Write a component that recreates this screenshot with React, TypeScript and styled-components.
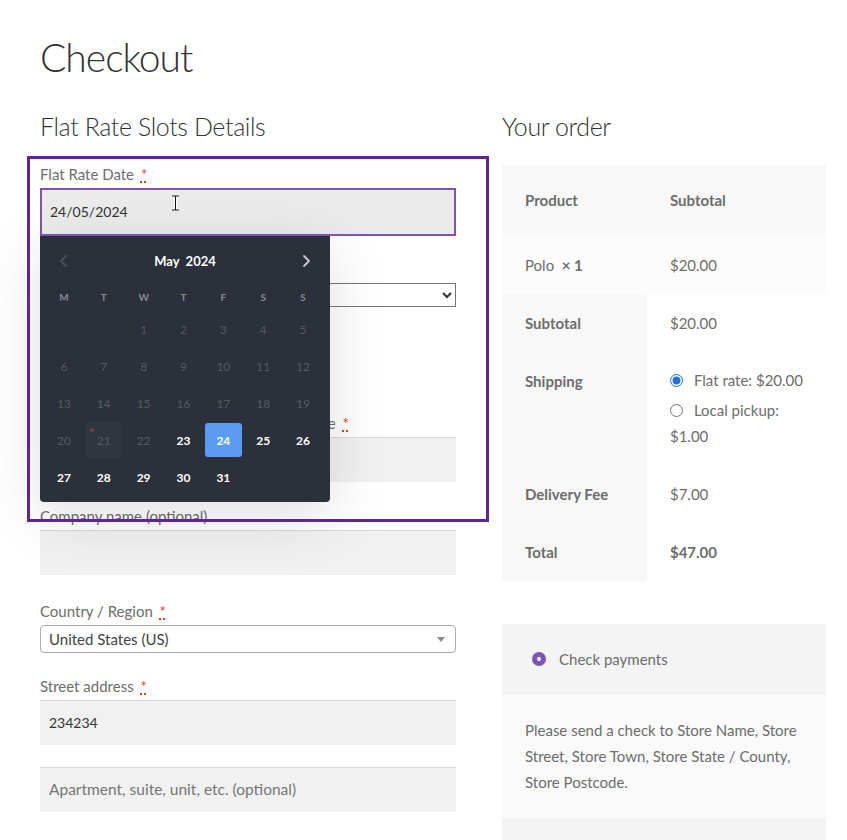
import React from "react";
import styled, { createGlobalStyle } from "styled-components";

const GlobalStyle = createGlobalStyle`
  html, body {
    margin: 0;
    padding: 0;
    background: #fff;
    overflow: hidden;
  }
  body {
    font-family: Lato, "Liberation Sans", sans-serif;
    font-size: 15px;
    color: #6d6d6d;
  }
  * {
    box-sizing: border-box;
  }
`;

const Page = styled.div`
  width: 786px;
  margin-left: 40px;
  padding-top: 34px;
  height: 840px;
`;

const Title = styled.h1`
  margin: 0;
  font-size: 39px;
  font-weight: 300;
  letter-spacing: -1px;
  line-height: 1.2;
  color: #333;
`;

const Columns = styled.div`
  display: grid;
  grid-template-columns: 416px 324px;
  column-gap: 46px;
  margin-top: 30px;
  align-items: start;
`;

const Column = styled.div`
  position: relative;
`;

const SectionTitle = styled.h3<{ $mb?: number }>`
  margin: 0 0 ${(p) => p.$mb ?? 20}px;
  font-size: 25px;
  font-weight: 300;
  letter-spacing: -0.4px;
  line-height: 1.2;
  color: #333;
`;

const Spacer = styled.div<{ $h: number }>`
  height: ${(p) => p.$h}px;
`;

// purple highlight frame drawn over the form
const Highlight = styled.div`
  position: absolute;
  top: 45px;
  left: -13px;
  width: 462px;
  height: 366px;
  border: 3px solid #5f2590;
  pointer-events: none;
  z-index: 6;
`;

const Field = styled.div<{ $mb?: number; $w?: string }>`
  position: relative;
  width: ${(p) => p.$w ?? "100%"};
  margin-bottom: ${(p) => p.$mb ?? 24}px;
`;

const NameRow = styled.div`
  display: flex;
  justify-content: space-between;
`;

const Label = styled.label`
  display: block;
  line-height: 24px;
  margin-bottom: 2px;
  font-size: 15px;
  color: #6d6d6d;
`;

const Req = styled.abbr`
  color: #e2401c;
  margin-left: 3px;
  text-decoration: underline dotted;
  text-decoration-thickness: 2px;
  text-underline-offset: 2px;
`;

const TextInput = styled.input<{ $focus?: boolean }>`
  display: block;
  width: 100%;
  height: ${(p) => (p.$focus ? 48 : 45)}px;
  padding: 0 ${(p) => (p.$focus ? 8 : 9)}px;
  font-family: inherit;
  font-size: 14px;
  color: #333;
  background: ${(p) => (p.$focus ? "#ebebeb" : "#f1f1f1")};
  border: ${(p) => (p.$focus ? "2px solid #7f54b3" : "0")};
  border-top: ${(p) => (p.$focus ? "2px solid #7f54b3" : "1px solid #dadada")};
  outline: none;
  &::placeholder {
    font-size: 15.5px;
    color: #767676;
  }
`;

const NativeSelect = styled.select`
  display: block;
  width: 100%;
  height: 24px;
  font-family: inherit;
  font-size: 13px;
  background: #fff;
  border: 1px solid #767676;
  color: #333;
`;

const Combo = styled.div`
  position: relative;
  height: 28px;
  border: 1px solid #aaa;
  border-radius: 4px;
  background: #fff;
  padding-left: 8px;
  line-height: 26px;
  font-size: 15px;
  color: #444;
  &::after {
    content: "";
    position: absolute;
    right: 10px;
    top: 11px;
    border-left: 4px solid transparent;
    border-right: 4px solid transparent;
    border-top: 5px solid #888;
  }
`;

const Cursor = styled.svg`
  position: absolute;
  left: 131px;
  top: 33px;
  z-index: 4;
`;

/* ---------- date picker ---------- */

const Picker = styled.div`
  position: absolute;
  top: 100%;
  left: 0;
  width: 290px;
  padding: 0 7px 6px 4px;
  background: #2b303a;
  border-radius: 0 0 4px 4px;
  box-shadow: 0 14px 60px rgba(0, 0, 0, 0.13);
  z-index: 5;
`;

const PickerHead = styled.div`
  height: 50px;
  display: flex;
  align-items: center;
  justify-content: space-between;
  padding: 0 7px 0 10px;
`;

const Month = styled.div`
  display: flex;
  gap: 6px;
  font-size: 13px;
  font-weight: 700;
  color: #fff;
`;

const WeekRow = styled.div`
  display: grid;
  grid-template-columns: repeat(7, 1fr);
  height: 22px;
  align-items: center;
  justify-items: center;
  font-size: 10px;
  font-weight: 700;
  color: #858a93;
`;

const DayGrid = styled.div`
  display: grid;
  grid-template-columns: repeat(7, 1fr);
  grid-auto-rows: 37px;
  align-items: center;
  justify-items: center;
  margin-top: 3px;
`;

type DayState = "off" | "on" | "selected" | "today";

const Day = styled.div<{ $state: DayState }>`
  position: relative;
  width: 37px;
  height: 34px;
  display: flex;
  align-items: center;
  justify-content: center;
  border-radius: 3px;
  font-size: 12px;
  font-weight: ${(p) => (p.$state === "on" || p.$state === "selected" ? 700 : 400)};
  color: ${(p) => (p.$state === "on" || p.$state === "selected" ? "#fff" : "#555a64")};
  background: ${(p) =>
    p.$state === "selected" ? "#5b9cf3" : p.$state === "today" ? "#30353f" : "transparent"};
`;

const TodayDot = styled.span`
  position: absolute;
  left: 5px;
  top: 5px;
  width: 4px;
  height: 4px;
  border-radius: 50%;
  background: #7d3a4a;
`;

const Chevron = ({ dir, color }: { dir: "l" | "r"; color: string }) => (
  <svg width="20" height="20" viewBox="0 0 20 20">
    <path
      d={dir === "l" ? "M12 5 L7 10 L12 15" : "M8 5 L13 10 L8 15"}
      fill="none"
      stroke={color}
      strokeWidth="1.8"
      strokeLinecap="round"
      strokeLinejoin="round"
    />
  </svg>
);

const dayState = (d: number): DayState =>
  d === 24 ? "selected" : d === 21 ? "today" : d >= 23 ? "on" : "off";

const DatePicker = () => {
  const cells: (number | null)[] = [null, null];
  for (let d = 1; d <= 31; d++) cells.push(d);
  return (
    <Picker>
      <PickerHead>
        <Chevron dir="l" color="#4a4f59" />
        <Month>
          <span>May</span>
          <span>2024</span>
        </Month>
        <Chevron dir="r" color="#c9ccd1" />
      </PickerHead>
      <WeekRow>
        {["M", "T", "W", "T", "F", "S", "S"].map((w, i) => (
          <span key={i}>{w}</span>
        ))}
      </WeekRow>
      <DayGrid>
        {cells.map((d, i) =>
          d === null ? (
            <span key={i} />
          ) : (
            <Day key={i} $state={dayState(d)}>
              {d === 21 && <TodayDot />}
              {d}
            </Day>
          )
        )}
      </DayGrid>
    </Picker>
  );
};

/* ---------- order review ---------- */

const OrderTable = styled.table`
  width: 100%;
  border-collapse: collapse;
  font-size: 15px;
  color: #6d6d6d;
  margin-bottom: 43px;
`;

const HeadCell = styled.th<{ $w?: number }>`
  text-align: left;
  font-weight: 700;
  background: #f8f8f8;
  padding: 23px 23px 24px;
  line-height: 24px;
  width: ${(p) => (p.$w ? `${p.$w}px` : "auto")};
`;

const ItemCell = styled.td`
  background: #fcfcfc;
  padding: 17px 23px;
  line-height: 24px;
`;

const FootLabel = styled.th`
  text-align: left;
  vertical-align: top;
  font-weight: 700;
  background: #f8f8f8;
  padding: 17px 23px;
  line-height: 24px;
`;

const FootValue = styled.td<{ $bold?: boolean }>`
  vertical-align: top;
  background: #fff;
  padding: 17px 23px;
  line-height: 24px;
  font-weight: ${(p) => (p.$bold ? 700 : 400)};
`;

const ShipList = styled.ul`
  list-style: none;
  margin: -2px 0 -1px;
  padding: 0;
  li {
    line-height: 26px;
    margin-bottom: 4px;
  }
  li:last-child {
    margin-bottom: 0;
  }
`;

const Radio = styled.input`
  width: 13px;
  height: 13px;
  margin: 0 11px 0 0;
  vertical-align: -1px;
  accent-color: #1a73e8;
`;

const Payment = styled.div`
  background: #f4f4f4;
  padding-bottom: 40px;
`;

const Method = styled.div`
  height: 71px;
  display: flex;
  align-items: center;
  gap: 13px;
  padding-left: 30px;
  font-size: 15px;
`;

const PurpleRadio = styled.span`
  width: 14px;
  height: 14px;
  border-radius: 50%;
  background: #7f54b3;
  position: relative;
  &::after {
    content: "";
    position: absolute;
    left: 5px;
    top: 5px;
    width: 4px;
    height: 4px;
    border-radius: 50%;
    background: #fff;
  }
`;

const PaymentNote = styled.div`
  background: #fafafa;
  padding: 22px 23px 23px;
  line-height: 26px;
  font-size: 15px;
`;

export default function App() {
  return (
    <>
      <GlobalStyle />
      <Page>
        <Title>Checkout</Title>
        <Columns>
          <Column>
            <SectionTitle $mb={21}>Flat Rate Slots Details</SectionTitle>
            <Field $mb={21}>
              <Label>
                Flat Rate Date <Req title="required">*</Req>
              </Label>
              <TextInput $focus readOnly value="24/05/2024" />
              <Cursor width="9" height="16" viewBox="0 0 9 16">
                <path d="M1 1 H8 M4.5 1 V15 M1 15 H8" stroke="#fff" strokeWidth="3" fill="none" />
                <path d="M1 1 H8 M4.5 1 V15 M1 15 H8" stroke="#111" strokeWidth="1" fill="none" />
              </Cursor>
              <DatePicker />
            </Field>
            <Field>
              <Label>
                Flat Rate Time <Req title="required">*</Req>
              </Label>
              <NativeSelect defaultValue="">
                <option value="">Select a time slot</option>
              </NativeSelect>
            </Field>
            <Spacer $h={80} />
            <NameRow>
              <Field $w="47%" $mb={22}>
                <Label>
                  First name <Req title="required">*</Req>
                </Label>
                <TextInput />
              </Field>
              <Field $w="45%" $mb={22}>
                <Label>
                  Last name <Req title="required">*</Req>
                </Label>
                <TextInput />
              </Field>
            </NameRow>
            <Field>
              <Label>Company name (optional)</Label>
              <TextInput />
            </Field>
            <Field $mb={21}>
              <Label>
                Country / Region <Req title="required">*</Req>
              </Label>
              <Combo>United States (US)</Combo>
            </Field>
            <Field $mb={22}>
              <Label>
                Street address <Req title="required">*</Req>
              </Label>
              <TextInput readOnly value="234234" />
            </Field>
            <Field>
              <TextInput placeholder="Apartment, suite, unit, etc. (optional)" />
            </Field>
            <Highlight />
          </Column>

          <Column>
            <SectionTitle $mb={24}>Your order</SectionTitle>
            <OrderTable>
              <thead>
                <tr>
                  <HeadCell $w={146}>Product</HeadCell>
                  <HeadCell>Subtotal</HeadCell>
                </tr>
              </thead>
              <tbody>
                <tr>
                  <ItemCell>
                    Polo <strong>&nbsp;× 1</strong>
                  </ItemCell>
                  <ItemCell>$20.00</ItemCell>
                </tr>
              </tbody>
              <tfoot>
                <tr>
                  <FootLabel>Subtotal</FootLabel>
                  <FootValue>$20.00</FootValue>
                </tr>
                <tr>
                  <FootLabel>Shipping</FootLabel>
                  <FootValue>
                    <ShipList>
                      <li style={{ whiteSpace: "nowrap" }}>
                        <Radio type="radio" name="ship" defaultChecked />
                        Flat rate: $20.00
                      </li>
                      <li>
                        <Radio type="radio" name="ship" />
                        Local pickup: $1.00
                      </li>
                    </ShipList>
                  </FootValue>
                </tr>
                <tr>
                  <FootLabel>Delivery Fee</FootLabel>
                  <FootValue>$7.00</FootValue>
                </tr>
                <tr>
                  <FootLabel>Total</FootLabel>
                  <FootValue $bold>$47.00</FootValue>
                </tr>
              </tfoot>
            </OrderTable>
            <Payment>
              <Method>
                <PurpleRadio />
                Check payments
              </Method>
              <PaymentNote>
                Please send a check to Store Name, Store Street, Store Town, Store State / County,
                Store Postcode.
              </PaymentNote>
            </Payment>
          </Column>
        </Columns>
      </Page>
    </>
  );
}
